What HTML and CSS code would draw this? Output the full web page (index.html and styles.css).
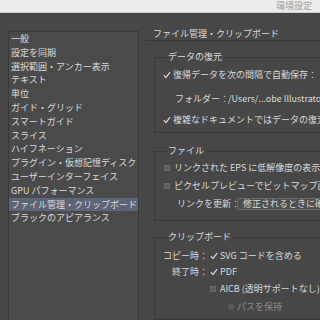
FILE: index.html
```html
<!DOCTYPE html>
<html lang="ja">
<head>
  <meta charset="UTF-8" />
  <title>環境設定</title>
  <link rel="stylesheet" href="styles.css">
</head>
<body>

<div class="titlebar"><span class="title">環境設定</span></div>

<div class="main">
  <!-- 左のカテゴリ一覧 -->
  <ul class="nav">
    <li>一般</li>
    <li>設定を同期</li>
    <li>選択範囲・アンカー表示</li>
    <li>テキスト</li>
    <li>単位</li>
    <li>ガイド・グリッド</li>
    <li>スマートガイド</li>
    <li>スライス</li>
    <li>ハイフネーション</li>
    <li>プラグイン・仮想記憶ディスク</li>
    <li>ユーザーインターフェイス</li>
    <li>GPU パフォーマンス</li>
    <li class="selected">ファイル管理・クリップボード</li>
    <li>ブラックのアピアランス</li>
  </ul>

  <div class="panel">
    <h2 class="panel-title">ファイル管理・クリップボード</h2>

    <fieldset class="group group-restore">
      <legend>データの復元</legend>
      <div class="row"><span class="mark on"><svg width="9" height="8" viewBox="0 0 9 8"><path d="M1 4.2 L3.3 7 L8 0.8" /></svg></span>復帰データを次の間隔で自動保存：</div>
      <div class="row folder"><span class="folder-label">フォルダー：</span><span class="path">/Users/...obe Illustrator</span></div>
      <div class="row"><span class="mark on"><svg width="9" height="8" viewBox="0 0 9 8"><path d="M1 4.2 L3.3 7 L8 0.8" /></svg></span>複雑なドキュメントではデータの復元を無効にする</div>
    </fieldset>

    <fieldset class="group group-file">
      <legend>ファイル</legend>
      <div class="row"><span class="box"></span>リンクされた EPS に低解像度の表示画像を使用</div>
      <div class="row"><span class="box"></span>ピクセルプレビューでビットマップ画像を表示</div>
      <div class="row link"><span class="link-label">リンクを更新：</span><span class="select">修正されるときに確認</span></div>
    </fieldset>

    <fieldset class="group group-clip">
      <legend>クリップボード</legend>
      <div class="row"><span class="clip-label">コピー時：</span><span class="mark on"><svg width="9" height="8" viewBox="0 0 9 8"><path d="M1 4.2 L3.3 7 L8 0.8" /></svg></span>SVG コードを含める</div>
      <div class="row"><span class="clip-label">終了時：</span><span class="mark on"><svg width="9" height="8" viewBox="0 0 9 8"><path d="M1 4.2 L3.3 7 L8 0.8" /></svg></span>PDF</div>
      <div class="row"><span class="clip-label"></span><span class="box"></span>AICB (透明サポートなし)</div>
      <div class="row disabled"><span class="clip-label"></span><span class="radio"></span>パスを保持</div>
    </fieldset>
  </div>
</div>

</body>
</html>
```

FILE: styles.css
```css
* { box-sizing: border-box; }
body {
  margin: 0;
  width: 320px;
  height: 320px;
  overflow: hidden;
  background-color: #474747;
  font-family: "Noto Sans CJK JP", "Noto Sans", sans-serif;
  font-size: 9px;
  color: #dadada;
  white-space: nowrap;
}
.titlebar {
  height: 13px;
  background-color: #ececec;
  border-bottom: 1px solid #cfcfcf;
  display: flex;
  justify-content: flex-end;
  align-items: center;
  padding-right: 8px;
}
.title {
  color: #a0a0a0;
  line-height: 12px;
}
.main {
  display: flex;
  padding-left: 8px;
}
.nav {
  list-style: none;
  margin: 18px 0 0;
  padding: 0;
  width: 131px;
  height: 300px;
  flex-shrink: 0;
  border: 1px solid #393939;
  background-color: #4a4a4a;
}
.nav li {
  line-height: 13.8px;
  padding-left: 2px;
}
.nav .selected {
  background-color: #5c6577;
}
.panel {
  margin-left: 7px;
  margin-top: 15px;
  width: 260px;
  flex-shrink: 0;
}
.panel-title {
  margin: 0;
  font-size: 9px;
  font-weight: normal;
  line-height: 12px;
  padding-left: 7px;
  border-bottom: 1px solid #3a3a3a;
}
.group {
  min-width: 0;
  width: 230px;
  margin: 10px 0 0 8px;
  padding: 5px 0 5px 8px;
  border: 1px solid #3a3a3a;
}
.group legend {
  line-height: 12px;
  padding: 0 2px;
  margin-left: 3px;
}
.row {
  display: flex;
  align-items: center;
  height: 14px;
  line-height: 14px;
}
.mark {
  width: 8px;
  margin-right: 2px;
  display: flex;
  align-items: center;
}
.mark path {
  fill: none;
  stroke: #e2e2e2;
  stroke-width: 1.2;
}
.box {
  width: 6px;
  height: 6px;
  margin: 0 4px 0 1px;
  background-color: #5e5e5e;
  border: 1px solid #6a6a6a;
}
.radio {
  width: 6px;
  height: 6px;
  margin-right: 3px;
  border-radius: 50%;
  background-color: #5a5a5a;
}

/* データの復元 */
.group-restore .folder { margin-top: 10px; padding-left: 12px; }
.group-restore .folder + .row { margin-top: 7px; }
.folder-label { width: 53px; }

/* ファイル */
.group-file { margin-top: 12px; padding: 4px 0 9px 8px; }
.group-file .row + .row { margin-top: 4px; }
.group-file .link { margin-top: 5px; padding-left: 14px; }
.link-label { width: 60px; flex-shrink: 0; }
.select {
  height: 12px;
  line-height: 10px;
  padding: 0 5px;
  width: 120px;
  border: 1px solid #6a6a6a;
  background-color: #4f4f4f;
}

/* クリップボード */
.group-clip { margin-top: 10px; padding-top: 6px; }
.group-clip .row:nth-child(3) { margin-top: 2px; }
.group-clip .row:nth-child(4) { margin-top: 3px; }
.group-clip .row:nth-child(5) { margin-top: 4px; }
.clip-label {
  width: 47px;
  text-align: right;
  padding-right: 2px;
}
.group-clip .box { margin-left: 0; }
.group-clip .radio { margin-left: 18px; }
.disabled { color: #8c8c8c; }
```
